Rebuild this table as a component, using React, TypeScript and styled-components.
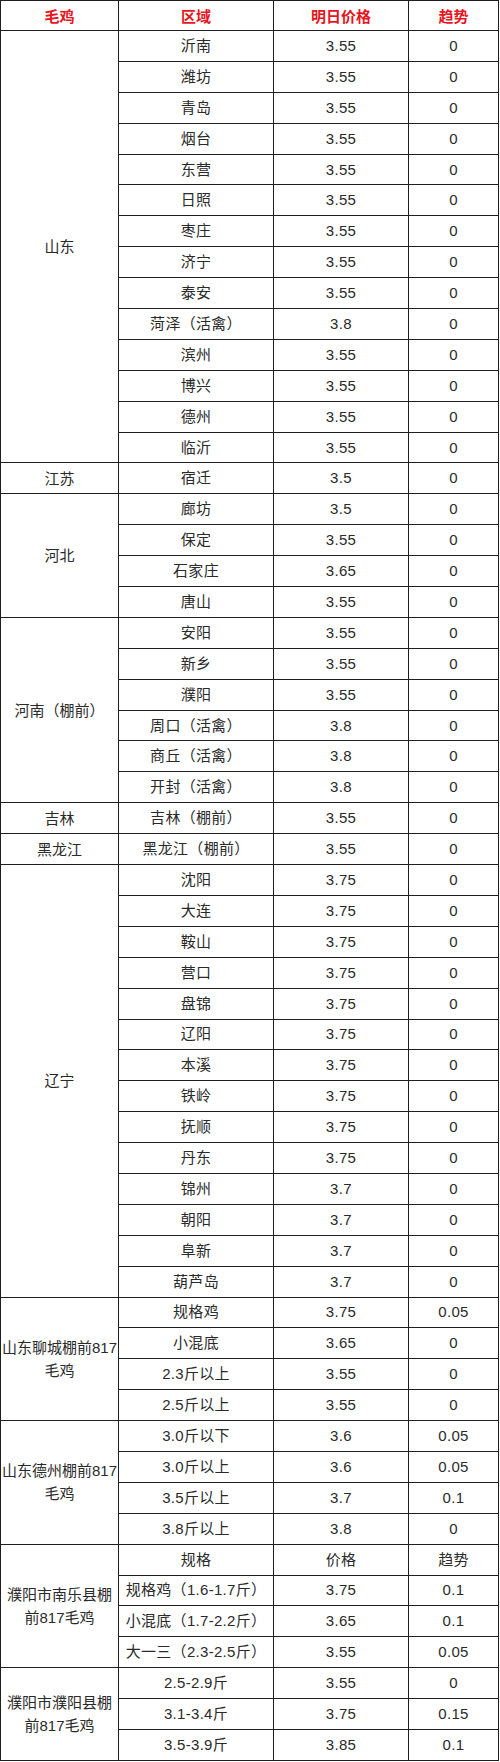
import React from "react";
import styled, { createGlobalStyle } from "styled-components";

const GlobalStyle = createGlobalStyle`
  html, body {
    margin: 0;
    padding: 0;
    background: #ffffff;
  }
  body {
    font-family: "Liberation Sans", "Noto Sans CJK SC", sans-serif;
  }
`;

const Table = styled.table`
  border-collapse: collapse;
  table-layout: fixed;
  width: 499px;
  height: 1761px;
  font-family: "Liberation Sans", "Noto Sans CJK SC", sans-serif;
  font-size: 15px;
  color: #2a2a2a;
`;

const Col = styled.col<{ $w: number }>`
  width: ${(p) => p.$w}px;
`;

const Row = styled.tr`
  height: 30px;
`;

const HeadCell = styled.th`
  border: 1px solid #1e1e1e;
  padding: 0;
  text-align: center;
  vertical-align: middle;
  color: #e8141e;
  font-weight: 700;
  font-size: 15px;
`;

const Cell = styled.td`
  border: 1px solid #1e1e1e;
  padding: 0 1px;
  text-align: center;
  vertical-align: middle;
  line-height: 22px;
  white-space: nowrap;
  letter-spacing: 0.3px;
`;

const GroupCell = styled(Cell)`
  line-height: 23px;
  letter-spacing: 0;
  overflow: visible;
`;

type Item = [string, string, string];
interface Group {
  name: React.ReactNode;
  rows: Item[];
}

const groups: Group[] = [
  {
    name: "山东",
    rows: [
      ["沂南", "3.55", "0"],
      ["潍坊", "3.55", "0"],
      ["青岛", "3.55", "0"],
      ["烟台", "3.55", "0"],
      ["东营", "3.55", "0"],
      ["日照", "3.55", "0"],
      ["枣庄", "3.55", "0"],
      ["济宁", "3.55", "0"],
      ["泰安", "3.55", "0"],
      ["菏泽（活禽）", "3.8", "0"],
      ["滨州", "3.55", "0"],
      ["博兴", "3.55", "0"],
      ["德州", "3.55", "0"],
      ["临沂", "3.55", "0"],
    ],
  },
  { name: "江苏", rows: [["宿迁", "3.5", "0"]] },
  {
    name: "河北",
    rows: [
      ["廊坊", "3.5", "0"],
      ["保定", "3.55", "0"],
      ["石家庄", "3.65", "0"],
      ["唐山", "3.55", "0"],
    ],
  },
  {
    name: "河南（棚前）",
    rows: [
      ["安阳", "3.55", "0"],
      ["新乡", "3.55", "0"],
      ["濮阳", "3.55", "0"],
      ["周口（活禽）", "3.8", "0"],
      ["商丘（活禽）", "3.8", "0"],
      ["开封（活禽）", "3.8", "0"],
    ],
  },
  { name: "吉林", rows: [["吉林（棚前）", "3.55", "0"]] },
  { name: "黑龙江", rows: [["黑龙江（棚前）", "3.55", "0"]] },
  {
    name: "辽宁",
    rows: [
      ["沈阳", "3.75", "0"],
      ["大连", "3.75", "0"],
      ["鞍山", "3.75", "0"],
      ["营口", "3.75", "0"],
      ["盘锦", "3.75", "0"],
      ["辽阳", "3.75", "0"],
      ["本溪", "3.75", "0"],
      ["铁岭", "3.75", "0"],
      ["抚顺", "3.75", "0"],
      ["丹东", "3.75", "0"],
      ["锦州", "3.7", "0"],
      ["朝阳", "3.7", "0"],
      ["阜新", "3.7", "0"],
      ["葫芦岛", "3.7", "0"],
    ],
  },
  {
    name: (
      <>
        山东聊城棚前817
        <br />
        毛鸡
      </>
    ),
    rows: [
      ["规格鸡", "3.75", "0.05"],
      ["小混底", "3.65", "0"],
      ["2.3斤以上", "3.55", "0"],
      ["2.5斤以上", "3.55", "0"],
    ],
  },
  {
    name: (
      <>
        山东德州棚前817
        <br />
        毛鸡
      </>
    ),
    rows: [
      ["3.0斤以下", "3.6", "0.05"],
      ["3.0斤以上", "3.6", "0.05"],
      ["3.5斤以上", "3.7", "0.1"],
      ["3.8斤以上", "3.8", "0"],
    ],
  },
  {
    name: (
      <>
        濮阳市南乐县棚
        <br />
        前817毛鸡
      </>
    ),
    rows: [
      ["规格", "价格", "趋势"],
      ["规格鸡（1.6-1.7斤）", "3.75", "0.1"],
      ["小混底（1.7-2.2斤）", "3.65", "0.1"],
      ["大一三（2.3-2.5斤）", "3.55", "0.05"],
    ],
  },
  {
    name: (
      <>
        濮阳市濮阳县棚
        <br />
        前817毛鸡
      </>
    ),
    rows: [
      ["2.5-2.9斤", "3.55", "0"],
      ["3.1-3.4斤", "3.75", "0.15"],
      ["3.5-3.9斤", "3.85", "0.1"],
    ],
  },
];

export default function App() {
  return (
    <>
      <GlobalStyle />
      <Table>
        <colgroup>
          <Col $w={118} />
          <Col $w={155} />
          <Col $w={135} />
          <Col $w={90} />
        </colgroup>
        <thead>
          <Row>
            <HeadCell>毛鸡</HeadCell>
            <HeadCell>区域</HeadCell>
            <HeadCell>明日价格</HeadCell>
            <HeadCell>趋势</HeadCell>
          </Row>
        </thead>
        <tbody>
          {groups.map((g, gi) =>
            g.rows.map((r, ri) => (
              <Row key={`${gi}-${ri}`}>
                {ri === 0 && (
                  <GroupCell rowSpan={g.rows.length}>{g.name}</GroupCell>
                )}
                <Cell>{r[0]}</Cell>
                <Cell>{r[1]}</Cell>
                <Cell>{r[2]}</Cell>
              </Row>
            ))
          )}
        </tbody>
      </Table>
    </>
  );
}
